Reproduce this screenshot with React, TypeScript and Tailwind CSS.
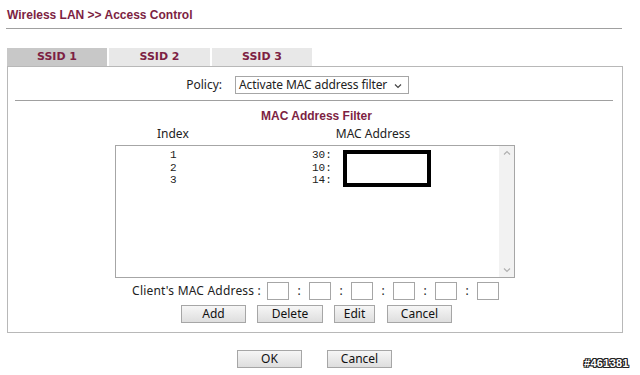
import React from "react";

const red = "text-[#7d1f43]";

function Btn({ label, w }: { label: string; w: string }) {
  return (
    <div
      className={`${w} h-[18px] border border-[#a6a6a6] bg-gradient-to-b from-[#f6f6f6] to-[#dedede] flex items-center justify-center text-[12px] text-[#111]`}
    >
      {label}
    </div>
  );
}

function MacBox() {
  return <div className="w-[22px] h-[18px] border border-[#a6a6a6] bg-white" />;
}

function Colon() {
  return <div className="w-[20px] text-center text-[12px] leading-[18px]">:</div>;
}

export default function App() {
  const rows = [
    ["1", "30:"],
    ["2", "10:"],
    ["3", "14:"],
  ];

  return (
    <div className="w-[640px] h-[375px] bg-white relative overflow-hidden font-['Noto_Sans',sans-serif] text-[#222]">
      {/* header */}
      <div className={`pl-[7px] pt-[8px] h-[28px] leading-[14px] text-[12px] font-bold font-['Liberation_Sans',Arial,sans-serif] ${red}`}>
        Wireless LAN &gt;&gt; Access Control
      </div>
      <div className="ml-[6px] w-[616px] border-t border-[#a0a0a0]" />

      {/* tabs */}
      <div className="ml-[7px] mt-[19px] flex gap-[2px] h-[18px] font-['DejaVu_Sans',sans-serif]">
        <div className={`w-[100px] bg-[#c8c8c8] flex items-center justify-center text-[11px] font-bold ${red}`}>SSID 1</div>
        <div className={`w-[101px] bg-[#e8e8e8] flex items-center justify-center text-[11px] font-bold ${red}`}>SSID 2</div>
        <div className={`w-[100px] bg-[#e8e8e8] flex items-center justify-center text-[11px] font-bold ${red}`}>SSID 3</div>
      </div>

      {/* panel */}
      <div className="ml-[7px] w-[616px] h-[267px] border border-[#b8b8b8] relative">
        {/* policy */}
        <div className="mt-[9px] flex items-center h-[18px]">
          <div className="w-[214px] text-right text-[12px]">Policy:</div>
          <div className="ml-[13px] w-[174px] h-[18px] border border-[#a6a6a6] flex items-center justify-between pl-[3px] pr-[6px] text-[12px] whitespace-nowrap">
            <span className="tracking-[-0.1px]">Activate MAC address filter</span>
            <svg width="8" height="6" viewBox="0 0 8 6" className="mt-[1px]">
              <path d="M1 1.5 L4 4.5 L7 1.5" fill="none" stroke="#444" strokeWidth="1.2" />
            </svg>
          </div>
        </div>
        <div className="ml-[7px] w-[598px] mt-[6px] border-t border-[#a0a0a0]" />

        <div className={`mt-[8px] pl-[253px] h-[15px] leading-[15px] text-[12px] font-bold font-['Liberation_Sans',Arial,sans-serif] ${red}`}>
          MAC Address Filter
        </div>
        <div className="mt-[2px] flex h-[15px] leading-[15px] text-[12px]">
          <div className="ml-[149px]">Index</div>
          <div className="ml-[147px]">MAC Address</div>
        </div>

        {/* list */}
        <div className="mt-[4px] ml-[107px] w-[400px] h-[133px] border border-[#a6a6a6] relative flex">
          <div className="flex-1 pt-[3px] font-['Liberation_Mono',monospace] text-[11px] leading-[12.5px] text-[#222]">
            {rows.map(([i, m]) => (
              <div key={i} className="flex">
                <div className="ml-[54px] w-[10px]">{i}</div>
                <div className="ml-[132px]">{m}</div>
              </div>
            ))}
          </div>
          <div className="w-[15px] bg-[#f2f2f2] flex flex-col justify-between items-center py-[4px]">
            <svg width="8" height="6" viewBox="0 0 8 6">
              <path d="M1 4.5 L4 1.5 L7 4.5" fill="none" stroke="#b0b0b0" strokeWidth="1.2" />
            </svg>
            <svg width="8" height="6" viewBox="0 0 8 6">
              <path d="M1 1.5 L4 4.5 L7 1.5" fill="none" stroke="#b0b0b0" strokeWidth="1.2" />
            </svg>
          </div>
          {/* redaction box */}
          <div className="absolute left-[227px] top-[4px] w-[88px] h-[37px] border-[4px] border-black bg-white" />
        </div>

        {/* client mac */}
        <div className="mt-[4px] flex items-center h-[18px]">
          <div className="w-[257px] text-right text-[12px] pr-[4px] whitespace-nowrap tracking-[0.2px]">Client's MAC Address :</div>
          <div className="ml-[2px] flex">
            <MacBox />
            <Colon />
            <MacBox />
            <Colon />
            <MacBox />
            <Colon />
            <MacBox />
            <Colon />
            <MacBox />
            <Colon />
            <MacBox />
          </div>
        </div>

        <div className="mt-[5px] ml-[173px] flex gap-[11px]">
          <Btn label="Add" w="w-[65px]" />
          <Btn label="Delete" w="w-[66px]" />
          <Btn label="Edit" w="w-[41px]" />
          <div className="ml-[1px]">
            <Btn label="Cancel" w="w-[65px]" />
          </div>
        </div>
      </div>

      {/* bottom buttons */}
      <div className="mt-[17px] ml-[237px] flex gap-[25px]">
        <Btn label="OK" w="w-[65px]" />
        <Btn label="Cancel" w="w-[65px]" />
      </div>

      <div
        className="absolute left-[584px] top-[355px] text-[11px] font-bold text-white font-['Liberation_Sans',Arial,sans-serif] tracking-[0.3px]"
        style={{ textShadow: "1px 0 #222, -1px 0 #222, 0 1px #222, 0 -1px #222, 1px 1px #222, -1px -1px #222, 1px -1px #222, -1px 1px #222" }}
      >
        #461381
      </div>
    </div>
  );
}
